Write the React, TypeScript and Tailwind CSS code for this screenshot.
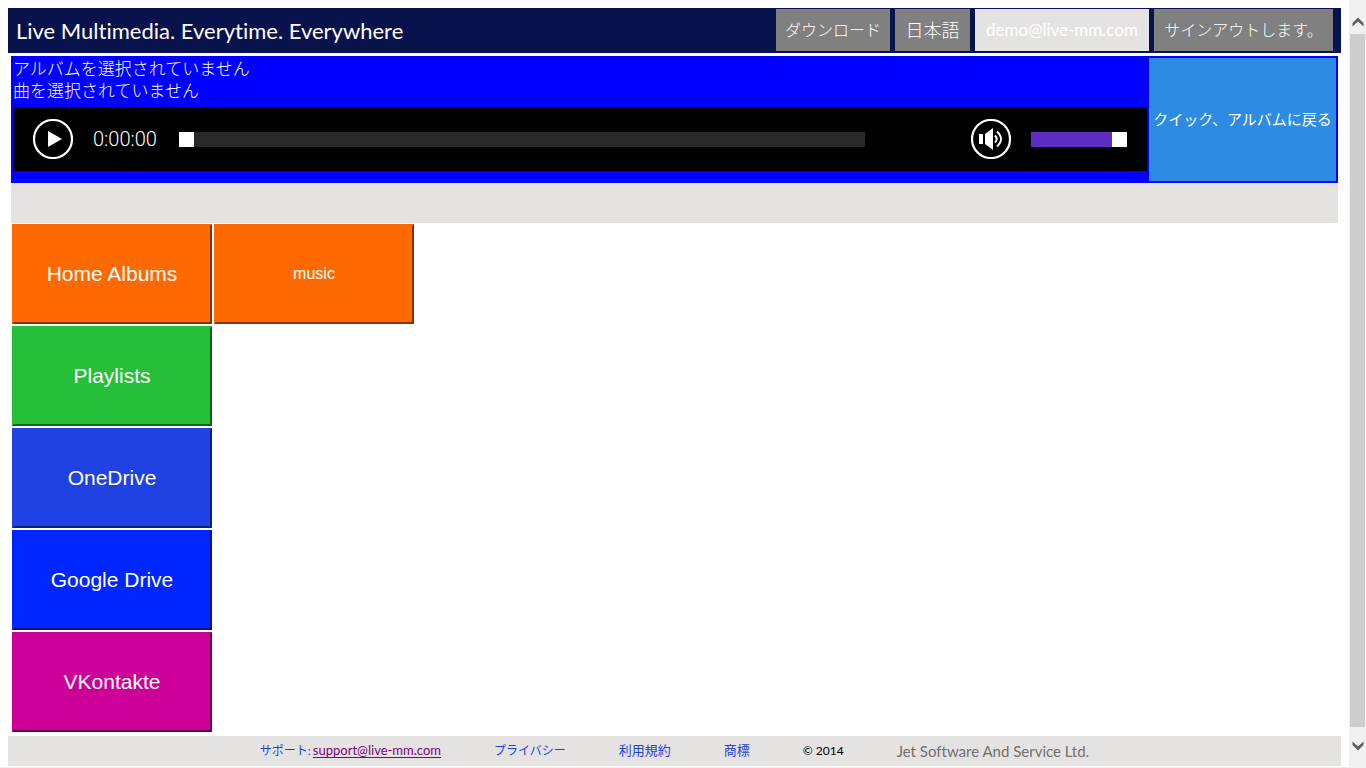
import React, { useState } from "react";

type Tile = { label: string; style: string };

const sources: Tile[] = [
  { label: "Home Albums", style: "bg-[#ff6a00] border-t-[#ff6a00] border-l-[#ff6a00] border-r-[#803500] border-b-[#803500]" },
  { label: "Playlists", style: "bg-[#26bf39] border-t-[#26bf39] border-l-[#26bf39] border-r-[#13601d] border-b-[#13601d]" },
  { label: "OneDrive", style: "bg-[#2142e2] border-t-[#2142e2] border-l-[#2142e2] border-r-[#102171] border-b-[#102171]" },
  { label: "Google Drive", style: "bg-[#0026ff] border-t-[#0026ff] border-l-[#0026ff] border-r-[#001380] border-b-[#001380]" },
  { label: "VKontakte", style: "bg-[#cc0099] border-t-[#cc0099] border-l-[#cc0099] border-r-[#66004d] border-b-[#66004d]" },
];

const albums = ["music"];

function Header() {
  const item = "flex h-[42px] items-center justify-center px-[9px] text-white";
  return (
    <header className="flex h-[45px] items-start justify-between bg-[#08124c] pl-2 pr-2 pt-px">
      <h1 className="text-[22px] leading-[44px] text-white">Live Multimedia. Everytime. Everywhere</h1>
      <nav className="flex gap-[5px] font-light">
        <button className={`${item} min-w-[114px] bg-[#808080] text-[16px]`}>ダウンロード</button>
        <button className={`${item} min-w-[75px] bg-[#808080] text-[18px]`}>日本語</button>
        <button className={`${item} min-w-[174px] bg-[#e4e3e1] text-[17px] font-normal`}>demo@live-mm.com</button>
        <button className={`${item} min-w-[179px] bg-[#808080] text-[16px]`}>サインアウトします。</button>
      </nav>
    </header>
  );
}

function Player() {
  const [position, setPosition] = useState(0);
  const [volume, setVolume] = useState(100);
  const slider =
    "h-[15px] cursor-pointer appearance-none [&::-webkit-slider-thumb]:size-[15px] [&::-webkit-slider-thumb]:appearance-none [&::-webkit-slider-thumb]:bg-white";
  return (
    <section className="mx-[3px] mt-[3px] flex bg-[#0000ff] p-[2px]">
      <div className="min-w-0 flex-1 pr-[2px]">
        <div className="h-[49px] text-[17px] font-light leading-[22px] text-white">
          <p>アルバムを選択されていません</p>
          <p>曲を選択されていません</p>
        </div>
        <div className="flex h-16 items-center bg-black px-5">
          <button aria-label="Play" className="size-10">
            <svg viewBox="0 0 40 40" className="size-10">
              <circle cx="20" cy="20" r="19" fill="none" stroke="white" strokeWidth="2.2" />
              <path d="M15 12 L29 20 L15 28 Z" fill="white" />
            </svg>
          </button>
          <span className="ml-5 w-[66px] font-[Roboto,sans-serif] text-[20px] font-light text-white">0:00:00</span>
          <input
            type="range"
            aria-label="Position"
            value={position}
            onChange={(e) => setPosition(Number(e.target.value))}
            className={`${slider} ml-5 min-w-0 flex-1 bg-[#292929]`}
          />
          <button aria-label="Mute" className="ml-[106px] size-10">
            <svg viewBox="0 0 40 40" className="size-10">
              <circle cx="20" cy="20" r="19" fill="none" stroke="white" strokeWidth="2.2" />
              <path d="M8 15 H12 V25 H8 Z M14 15 L22 9 V31 L14 25 Z" fill="white" />
              <path d="M24 16.5 Q27.5 20 24 23.5 M26 12.5 Q34 20 26 27.5" fill="none" stroke="white" strokeWidth="1.9" />
            </svg>
          </button>
          <input
            type="range"
            aria-label="Volume"
            value={volume}
            onChange={(e) => setVolume(Number(e.target.value))}
            className={`${slider} ml-5 w-24 bg-[#5c2dc3]`}
          />
        </div>
      </div>
      <button className="h-[123px] w-[187px] bg-[#2e8be3] text-[15px] text-white">クイック、アルバムに戻る</button>
    </section>
  );
}

function Library() {
  const tile = "h-[100px] w-[200px] border-2 text-white";
  return (
    <main className="ml-1 mt-px flex flex-1 items-start gap-[2px] font-['Liberation_Sans',Arial,sans-serif]">
      <div className="flex flex-col gap-[2px]">
        {sources.map((s) => (
          <button key={s.label} className={`${tile} text-[21px] ${s.style}`}>
            {s.label}
          </button>
        ))}
      </div>
      <div className="flex flex-wrap gap-[2px]">
        {albums.map((name) => (
          <button key={name} className={`${tile} text-[16px] ${sources[0].style}`}>
            {name}
          </button>
        ))}
      </div>
    </main>
  );
}

function Footer() {
  return (
    <footer className="mb-px mt-1 flex h-[30px] items-center justify-center gap-[53px] bg-[#e4e3e1] text-[13px] text-[#2142e2]">
      <div className="flex items-center gap-[2px]">
        <span className="text-[12px]">サポート:</span>
        <a href="mailto:support@live-mm.com" className="text-[#800080] underline underline-offset-2">
          support@live-mm.com
        </a>
      </div>
      <a href="#privacy" className="text-[12px]">プライバシー</a>
      <a href="#terms">利用規約</a>
      <a href="#trademarks">商標</a>
      <span className="text-[12px] text-black">© 2014</span>
      <span className="text-[15px] text-[#707070]">Jet Software And Service Ltd.</span>
    </footer>
  );
}

function ScrollRail() {
  const arrow = "flex w-full items-center justify-center";
  return (
    <aside className="flex w-[17px] flex-col items-center bg-[#f0f0f0]">
      <button aria-label="Scroll up" className={`${arrow} h-[34px] pt-[10px]`}>
        <svg viewBox="0 0 12 10" className="h-[10px] w-3">
          <path d="M0.5 6 L6 0.5 L11.5 6 V9.5 L6 4.5 L0.5 9.5 Z" fill="#606060" />
        </svg>
      </button>
      <div className="w-[15px] flex-1 bg-[#cdcdcd]" />
      <button aria-label="Scroll down" className={`${arrow} h-[41px] pb-1`}>
        <svg viewBox="0 0 12 10" className="h-[10px] w-3">
          <path d="M0.5 4 L6 9.5 L11.5 4 V0.5 L6 5.5 L0.5 0.5 Z" fill="#606060" />
        </svg>
      </button>
    </aside>
  );
}

export default function App() {
  return (
    <div className="flex min-h-screen bg-white font-[Lato,'Noto_Sans_CJK_JP',sans-serif] [font-variant-ligatures:none]">
      <div className="flex min-w-0 flex-1 flex-col border-b border-[#f0f0f0] pl-2 pr-2 pt-2">
        <Header />
        <Player />
        <div className="mx-[3px] h-10 bg-[#e4e3e1]" />
        <Library />
        <Footer />
      </div>
      <ScrollRail />
    </div>
  );
}
